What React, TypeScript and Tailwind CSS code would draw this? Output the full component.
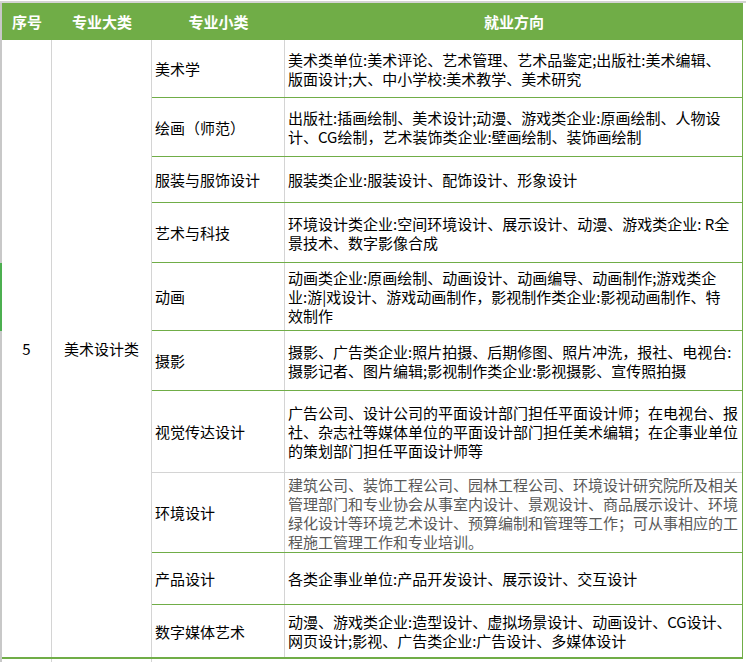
type Row = {
  name: string;
  h: string;
  lines: string[];
  muted?: boolean;
  grayLine?: boolean;
};

const rows: Row[] = [
  {
    name: "美术学",
    h: "h-[58px]",
    lines: [
      "美术类单位:美术评论、艺术管理、艺术品鉴定;出版社:美术编辑、",
      "版面设计;大、中小学校:美术教学、美术研究",
    ],
  },
  {
    name: "绘画（师范）",
    h: "h-[59px]",
    lines: [
      "出版社:插画绘制、美术设计;动漫、游戏类企业:原画绘制、人物设",
      "计、CG绘制，艺术装饰类企业:壁画绘制、装饰画绘制",
    ],
  },
  {
    name: "服装与服饰设计",
    h: "h-[46px]",
    lines: ["服装类企业:服装设计、配饰设计、形象设计"],
  },
  {
    name: "艺术与科技",
    h: "h-[60px]",
    lines: [
      "环境设计类企业:空间环境设计、展示设计、动漫、游戏类企业: R全",
      "景技术、数字影像合成",
    ],
  },
  {
    name: "动画",
    h: "h-[68px]",
    lines: [
      "动画类企业:原画绘制、动画设计、动画编导、动画制作;游戏类企",
      "业:游|戏设计、游戏动画制作，影视制作类企业:影视动画制作、特",
      "效制作",
    ],
  },
  {
    name: "摄影",
    h: "h-[60px]",
    lines: [
      "摄影、广告类企业:照片拍摄、后期修图、照片冲洗，报社、电视台:",
      "摄影记者、图片编辑;影视制作类企业:影视摄影、宣传照拍摄",
    ],
  },
  {
    name: "视觉传达设计",
    h: "h-[82px]",
    grayLine: true,
    lines: [
      "广告公司、设计公司的平面设计部门担任平面设计师；在电视台、报",
      "社、杂志社等媒体单位的平面设计部门担任美术编辑；在企事业单位",
      "的策划部门担任平面设计师等",
    ],
  },
  {
    name: "环境设计",
    h: "h-[80px]",
    muted: true,
    lines: [
      "建筑公司、装饰工程公司、园林工程公司、环境设计研究院所及相关",
      "管理部门和专业协会从事室内设计、景观设计、商品展示设计、环境",
      "绿化设计等环境艺术设计、预算编制和管理等工作；可从事相应的工",
      "程施工管理工作和专业培训。",
    ],
  },
  {
    name: "产品设计",
    h: "h-[52px]",
    lines: ["各类企事业单位:产品开发设计、展示设计、交互设计"],
  },
  {
    name: "数字媒体艺术",
    h: "h-[52px]",
    lines: [
      "动漫、游戏类企业:造型设计、虚拟场景设计、动画设计、CG设计、",
      "网页设计;影视、广告类企业:广告设计、多媒体设计",
    ],
  },
];

export default function App() {
  return (
    <div
      className="w-[746px] h-[662px] overflow-hidden bg-white text-[15px] leading-[19px] text-black"
      style={{ fontFamily: '"Noto Sans CJK SC", "Liberation Sans", sans-serif' }}
    >
      <div className="h-[3px] border-b-2 border-[#d4d4d4]" />
      <div className="flex">
        {/* row header edge */}
        <div className="w-[2px] flex flex-col">
          <div className="h-[260px] bg-[#c8c8c8]" />
          <div className="h-[68px] bg-[#4caf50]" />
          <div className="flex-1 bg-[#c8c8c8]" />
        </div>

        <div className="w-[741px] flex flex-col">
          <div className="h-[37px] flex items-center bg-[#70ad47] font-bold text-white">
            <div className="w-[50px] text-center">序号</div>
            <div className="w-[100px] text-center">专业大类</div>
            <div className="w-[133px] text-center">专业小类</div>
            <div className="flex-1 text-center">就业方向</div>
          </div>

          <div className="flex">
            <div className="w-[50px] flex items-center justify-center border-r border-[#d4d4d4]">
              5
            </div>
            <div className="w-[100px] flex items-center justify-center border-r border-[#d4d4d4]">
              美术设计类
            </div>
            <div className="w-[591px] flex flex-col border-r border-[#70ad47]">
              {rows.map((r, i) => (
                <div
                  key={r.name}
                  className={`${r.h} flex ${
                    i === rows.length - 1
                      ? ""
                      : r.grayLine
                      ? "border-b border-[#d4d4d4]"
                      : "border-b border-[#70ad47]"
                  }`}
                >
                  <div className="w-[133px] flex items-center pl-[3px] border-r border-[#d4d4d4]">
                    {r.name}
                  </div>
                  <div
                    className={`flex-1 flex flex-col justify-center pl-[3px] ${
                      r.muted ? "text-[#595959]" : ""
                    }`}
                  >
                    {r.lines.map((l) => (
                      <div key={l} className="whitespace-nowrap">
                        {l}
                      </div>
                    ))}
                  </div>
                </div>
              ))}
            </div>
          </div>

          <div className="h-[2px] bg-[#70ad47]" />
          <div className="h-[4px] flex">
            <div className="w-[50px] border-r border-[#d4d4d4]" />
            <div className="w-[100px] border-r border-[#d4d4d4]" />
          </div>
        </div>

        <div className="w-[3px]" />
      </div>
    </div>
  );
}
